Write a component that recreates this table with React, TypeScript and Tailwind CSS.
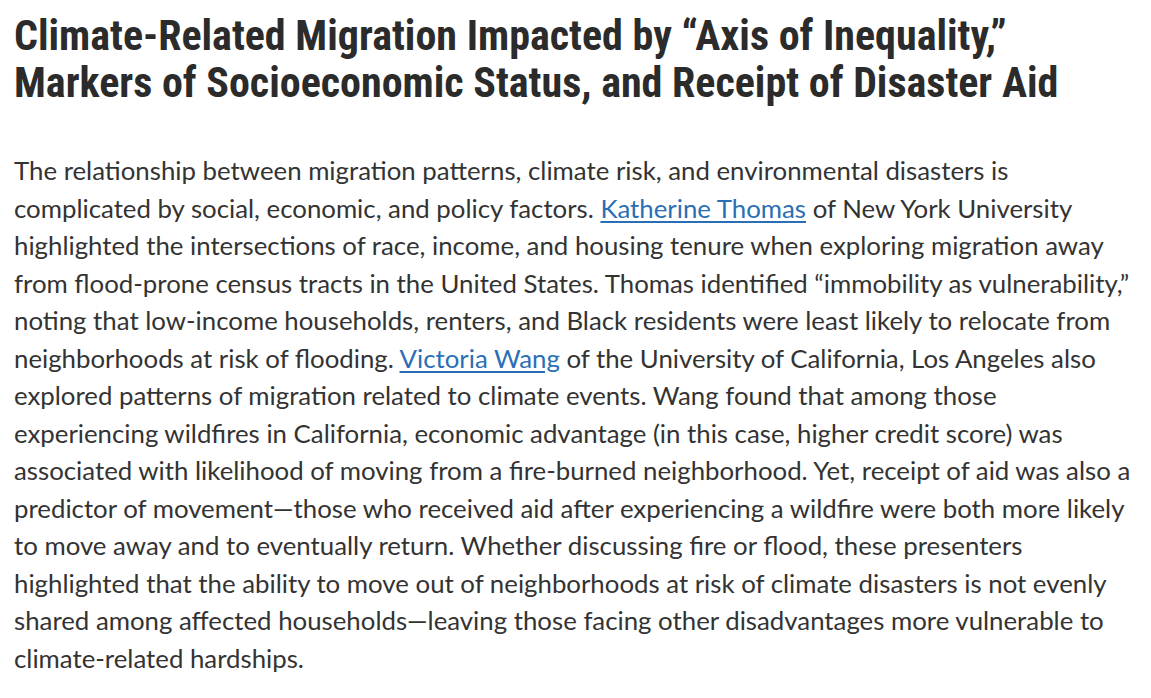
export default function App() {
  return (
    <div className="min-h-screen bg-white px-[14px] pt-[12px] text-[#333333]">
      <h1 className="font-['Roboto','Liberation_Sans',sans-serif] text-[42px] font-bold leading-[47px] text-[#2b2b2b] [font-stretch:condensed] whitespace-nowrap">
        Climate-Related Migration Impacted by “Axis of Inequality,”
        <br />
        Markers of Socioeconomic Status, and Receipt of Disaster Aid
      </h1>

      <p className="mt-[46px] font-['Lato','Noto_Sans',sans-serif] text-[25.8px] leading-[37.5px] whitespace-nowrap">
        The relationship between migration patterns, climate risk, and environmental disasters is
        <br />
        complicated by social, economic, and policy factors.{" "}
        <a href="#" className="text-[#2a6fb5] underline underline-offset-[3px]">
          Katherine Thomas
        </a>{" "}
        of New York University
        <br />
        highlighted the intersections of race, income, and housing tenure when exploring migration away
        <br />
        from flood-prone census tracts in the United States. Thomas identified “immobility as vulnerability,”
        <br />
        noting that low-income households, renters, and Black residents were least likely to relocate from
        <br />
        neighborhoods at risk of flooding.{" "}
        <a href="#" className="text-[#2a6fb5] underline underline-offset-[3px]">
          Victoria Wang
        </a>{" "}
        of the University of California, Los Angeles also
        <br />
        explored patterns of migration related to climate events. Wang found that among those
        <br />
        experiencing wildfires in California, economic advantage (in this case, higher credit score) was
        <br />
        associated with likelihood of moving from a fire-burned neighborhood. Yet, receipt of aid was also a
        <br />
        predictor of movement—those who received aid after experiencing a wildfire were both more likely
        <br />
        to move away and to eventually return. Whether discussing fire or flood, these presenters
        <br />
        highlighted that the ability to move out of neighborhoods at risk of climate disasters is not evenly
        <br />
        shared among affected households—leaving those facing other disadvantages more vulnerable to
        <br />
        climate-related hardships.
      </p>
    </div>
  )
}
